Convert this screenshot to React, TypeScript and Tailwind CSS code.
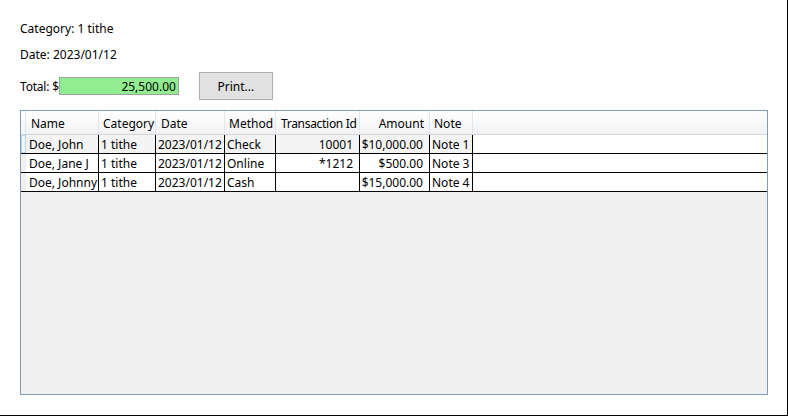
import React from "react";

const cols = "grid grid-cols-[5px_73px_57px_69px_51px_84px_70px_43px_1fr]";

const rows = [
  { name: "Doe, John", cat: "1 tithe", date: "2023/01/12", method: "Check", tid: "10001", amt: "$10,000.00", note: "Note 1" },
  { name: "Doe, Jane J", cat: "1 tithe", date: "2023/01/12", method: "Online", tid: "*1212", amt: "$500.00", note: "Note 3" },
  { name: "Doe, Johnny", cat: "1 tithe", date: "2023/01/12", method: "Cash", tid: "", amt: "$15,000.00", note: "Note 4" },
];

const hcell = "border-r border-[#e3e6ea] leading-[25px] whitespace-nowrap overflow-hidden";
const dcell = "border-r border-black leading-[20px] whitespace-nowrap overflow-hidden";

export default function App() {
  return (
    <div
      className="w-[788px] h-[416px] bg-white border-r border-b border-black text-[12px] text-black overflow-hidden"
      style={{ fontFamily: '"Noto Sans", "Open Sans", sans-serif' }}
    >
      <div className="pl-[20px] pt-[20px] pr-[20px]">
        <div className="h-[18px] leading-[18px]">Category: 1 tithe</div>
        <div className="h-[18px] leading-[18px] mt-[8px]">Date: 2023/01/12</div>
        <div className="flex items-center h-[28px] mt-[8px]">
          <span className="h-[18px] leading-[20px] tracking-[-0.2px]">Total: $</span>
          <div className="w-[120px] h-[18px] bg-[#90ee90] border border-[#a0a0a0] text-right pr-[2px] leading-[17px]">
            25,500.00
          </div>
          <div className="ml-[20px] w-[74px] h-[28px] bg-[#e1e1e1] border border-[#adadad] flex items-center justify-center leading-[20px] pt-[1px]">
            Print...
          </div>
        </div>
        <div className="mt-[10px] w-[748px] h-[285px] border border-[#7f9db9] bg-[#f0f0f0] flex flex-col">
          <div className={`${cols} h-[24px] bg-gradient-to-b from-white to-[#f1f2f4] border-b border-[#d5d5d5]`}>
            <div className="border-r border-[#e3e6ea]" />
            <div className={`${hcell} pl-[5px]`}>Name</div>
            <div className={`${hcell} pl-[4px]`}>Category</div>
            <div className={`${hcell} pl-[5px]`}>Date</div>
            <div className={`${hcell} pl-[4px]`}>Method</div>
            <div className={`${hcell} pl-[5px] tracking-[-0.3px]`}>Transaction Id</div>
            <div className={`${hcell} pr-[5px] text-right`}>Amount</div>
            <div className={`${hcell} pl-[4px]`}>Note</div>
            <div />
          </div>
          {rows.map((r, i) => (
            <div
              key={i}
              className={`${cols} h-[19px] border-b border-black ${i === 0 ? "bg-[#f4f4f4]" : "bg-white"}`}
            >
              <div className={i === 0 ? "border border-[#b8d6f0] bg-[#eef5fc]" : "bg-[#f0f0f0]"} />
              <div className={`${dcell} pl-[3px]`}>{r.name}</div>
              <div className={`${dcell} pl-[2px]`}>{r.cat}</div>
              <div className={`${dcell} pl-[2px]`}>{r.date}</div>
              <div className={`${dcell} pl-[2px]`}>{r.method}</div>
              <div className={`${dcell} pr-[6px] text-right`}>{r.tid}</div>
              <div className={`${dcell} pr-[6px] text-right`}>{r.amt}</div>
              <div className={`${dcell} pl-[2px]`}>{r.note}</div>
              <div className="bg-white" />
            </div>
          ))}
        </div>
      </div>
    </div>
  );
}
